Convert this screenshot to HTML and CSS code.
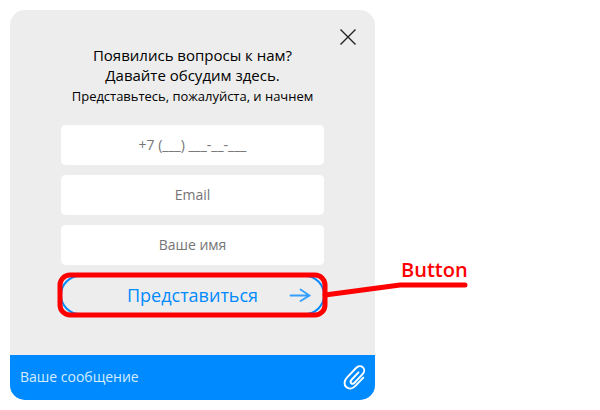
FILE: index.html
```html
<!DOCTYPE html>
<html lang="ru">
<head>
<meta charset="utf-8">
<title>Чат</title>
<link rel="stylesheet" href="styles.css">
</head>
<body>
<main class="chat">
  <section class="content">
    <svg class="close" viewBox="0 0 16 16"><path d="M.5 .5l15 15M15.5 .5l-15 15"/></svg>
    <header class="intro">
      <p class="title">Появились вопросы к нам?</p>
      <p class="title">Давайте обсудим здесь.</p>
      <p class="subtitle">Представьтесь, пожалуйста, и начнем</p>
    </header>
    <form class="form">
      <div class="field">+7 (___) ___-__-___</div>
      <div class="field">Email</div>
      <div class="field">Ваше имя</div>
      <div class="submit">
        <span>Представиться</span>
        <svg class="arrow" viewBox="0 0 22 14"><path d="M1.500 7.500h19M11.500 1.500l9 6-9 5.500"/></svg>
      </div>
    </form>
  </section>
  <footer class="message">
    <span class="message-text">Ваше сообщение</span>
    <svg class="clip" viewBox="0.4 1.5 22.4 26.1"><path d="M15.8 9.300L9.300 16.200c-1.200 1.300-1 2.500-.3 3.200.8.7 2 .7 3.100-.4l7.500-8c2-2.200 1.900-4.900.3-6.400-1.600-1.500-4.400-1.500-6.400.6L5 14.200c-2.900 3-2.800 6.700-.6 8.800 2.200 2.100 5.700 1.900 8.300-.8l7.600-8"/></svg>
  </footer>
</main>
<svg class="callout" viewBox="0 0 600 410">
  <rect x="60" y="275" width="265" height="40" rx="10"/>
  <path d="M325 295L400 285H465"/>
</svg>
<span class="callout-label">Button</span>
</body>
</html>
```

FILE: styles.css
```css
* { box-sizing: border-box; }
body {
  margin: 0;
  padding: 10px;
  background: #fff;
  color: #000;
  font-family: "Open Sans", sans-serif;
}
p { margin: 0; }
svg { fill: none; display: block; }
.chat {
  width: 365px;
  height: 390px;
  display: flex;
  flex-direction: column;
  border-radius: 15px;
  overflow: hidden;
  background: #ededed;
}
.content { flex: 1; padding: 35px 50px 0; }
.close {
  position: absolute;
  left: 340px;
  top: 29px;
  width: 16px;
  height: 16px;
  stroke: #222;
  stroke-width: 1.4;
}
.intro { height: 80px; text-align: center; white-space: nowrap; }
.title { font-size: 15px; line-height: 20px; }
.subtitle { font-size: 13px; line-height: 22px; letter-spacing: -0.02px; }
.form { display: flex; flex-direction: column; gap: 10px; }
.field {
  height: 40px;
  border: solid #ededed;
  border-width: 0 0.5px;
  border-radius: 5px;
  background: #fff;
  color: #757575;
  font-size: 14px;
  line-height: 40px;
  text-align: center;
}
.submit {
  position: relative;
  height: 40px;
  border: 2px solid #008aff;
  border-radius: 20px;
  color: #008aff;
  font-size: 18px;
  line-height: 36px;
  text-align: center;
}
.arrow {
  position: absolute;
  right: 12px;
  top: 11px;
  width: 22px;
  height: 14px;
  stroke: #349fff;
  stroke-width: 1.8;
  stroke-linecap: round;
}
.message {
  height: 45px;
  padding: 0 9px 0 10px;
  display: flex;
  align-items: center;
  justify-content: space-between;
  background: #008aff;
  color: #d5ecff;
  font-size: 14px;
}
.message-text { padding-bottom: 2px; }
.clip {
  width: 24px;
  height: 28px;
  stroke: #fff;
  stroke-width: 1.8;
  stroke-linecap: round;
}
.callout {
  position: absolute;
  inset: 0;
  width: 600px;
  height: 410px;
  stroke: #f00;
  stroke-width: 5;
  stroke-linecap: round;
  stroke-linejoin: round;
}
.callout-label {
  position: absolute;
  left: 401px;
  top: 257px;
  color: #f00;
  font-size: 20px;
  font-weight: 600;
  line-height: 26px;
}
```
